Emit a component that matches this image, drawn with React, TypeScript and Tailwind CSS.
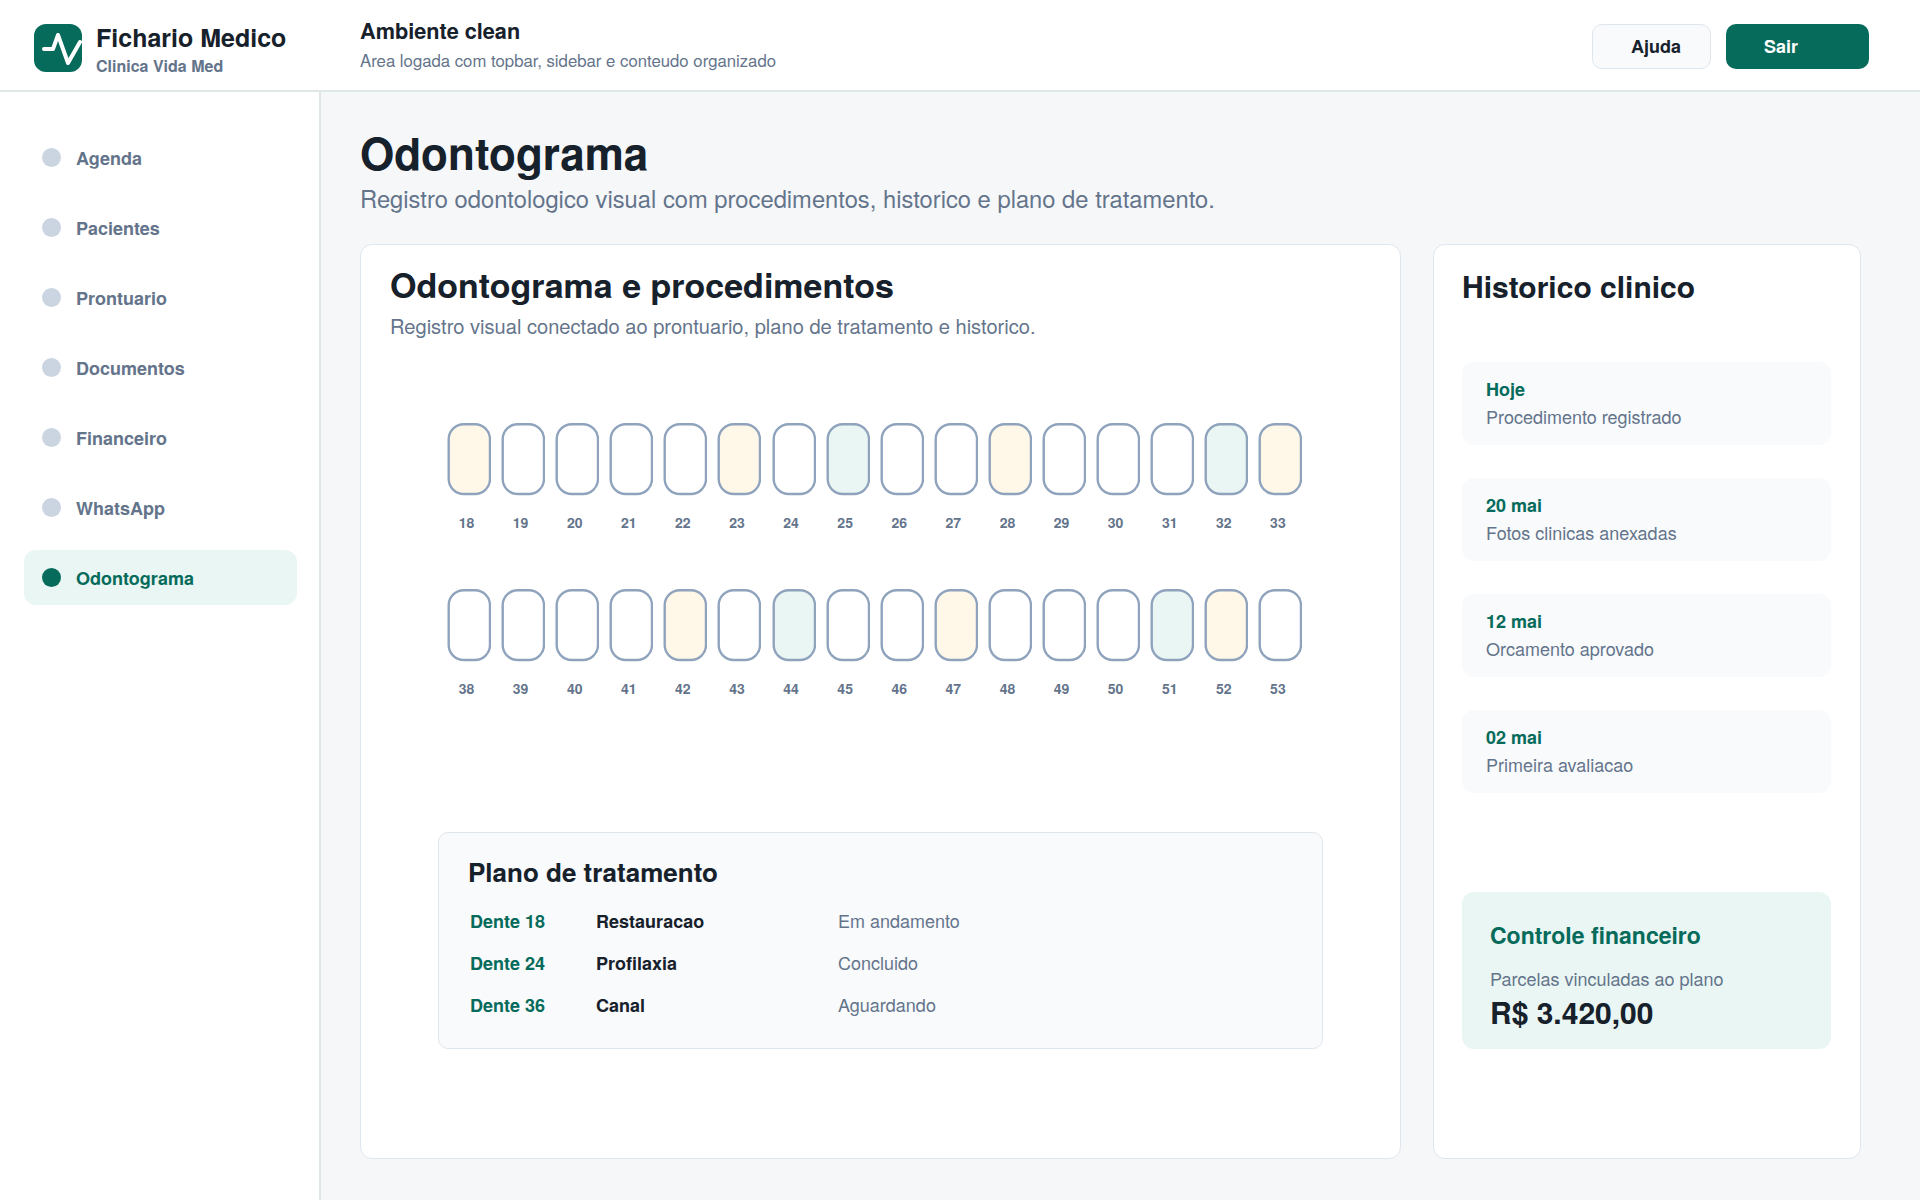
const navItems = ["Agenda", "Pacientes", "Prontuario", "Documentos", "Financeiro", "WhatsApp", "Odontograma"]

const amber = [18, 23, 28, 33, 42, 47, 52]
const green = [25, 32, 44, 51]

const historico = [
  { date: "Hoje", text: "Procedimento registrado" },
  { date: "20 mai", text: "Fotos clinicas anexadas" },
  { date: "12 mai", text: "Orcamento aprovado" },
  { date: "02 mai", text: "Primeira avaliacao" },
]

const plano = [
  { dente: "Dente 18", proc: "Restauracao", status: "Em andamento" },
  { dente: "Dente 24", proc: "Profilaxia", status: "Concluido" },
  { dente: "Dente 36", proc: "Canal", status: "Aguardando" },
]

const range = (from: number, to: number) => {
  const out: number[] = []
  for (let n = from; n <= to; n++) out.push(n)
  return out
}

const Tooth = ({ n }: { n: number }) => {
  const fill = amber.includes(n) ? "#fff7e8" : green.includes(n) ? "#e9f6f3" : "#ffffff"
  return (
    <div className="flex w-[44px] flex-col">
      <svg width="44" height="73" viewBox="0 0 44 73" fill="none">
        <rect x="1.7" y="1.3" width="41.3" height="69.7" rx="15" fill={fill} stroke="#8fa3bd" strokeWidth="2.4" />
      </svg>
      <div className="mt-[16px] w-[39px] text-center text-[14px] leading-[20px] font-bold text-[#64748b]">{n}</div>
    </div>
  )
}

export default function App() {
  return (
    <div className="flex h-[1200px] w-[1920px] flex-col overflow-hidden bg-[#f5f7f9] font-['TeX_Gyre_Heros','Liberation_Sans',Arial,sans-serif] text-[#17212b]">
      {/* Topbar */}
      <header className="flex h-[92px] shrink-0 items-start border-b-2 border-[#dfe7e7] bg-white pt-[24px]">
        <div className="flex w-[360px] items-start pl-[34px]">
          <div className="h-[48px] w-[48px] overflow-hidden rounded-[12px] bg-[#066b5b]">
            <svg width="48" height="48" viewBox="0 0 48 48" fill="none">
              <path d="M10 25h9l5-14 10 28 12-21" stroke="#fff" strokeWidth="4" strokeLinecap="round" strokeLinejoin="round" />
            </svg>
          </div>
          <div className="-mt-[2px] ml-[14px]">
            <div className="text-[25px] leading-[30px] font-bold">Fichario Medico</div>
            <div className="mt-[4px] text-[16px] leading-[20px] font-bold text-[#64748b]">Clinica Vida Med</div>
          </div>
        </div>
        <div className="-mt-[6px] flex-1">
          <div className="text-[21.7px] leading-[26px] font-bold">Ambiente clean</div>
          <div className="mt-[5px] text-[16.75px] leading-[22px] text-[#64748b]">Area logada com topbar, sidebar e conteudo organizado</div>
        </div>
        <div className="flex items-center gap-[15px] pr-[51px]">
          <button className="h-[45px] w-[119px] rounded-[10px] border border-[#dfe7ee] bg-[#f8fafc] pl-[38px] text-left text-[18px] font-bold">Ajuda</button>
          <button className="h-[45px] w-[143px] rounded-[10px] bg-[#066b5b] pl-[38px] text-left text-[18px] font-bold text-white">Sair</button>
        </div>
      </header>

      <div className="flex min-h-0 flex-1">
        {/* Sidebar */}
        <aside className="flex w-[321px] shrink-0 flex-col gap-[15px] border-r-2 border-[#dfe7e7] bg-white pt-[38px] pr-[22px] pl-[24px]">
          {navItems.map((item) => {
            const active = item === "Odontograma"
            return (
              <div key={item} className={`flex h-[55px] items-center rounded-[12px] pl-[18px] ${active ? "bg-[#eaf6f3]" : ""}`}>
                <span className={`h-[19px] w-[19px] rounded-full ${active ? "bg-[#066b5b]" : "bg-[#cbd5e1]"}`} />
                <span className={`ml-[15px] pt-[2px] text-[18px] font-bold ${active ? "text-[#066b5b]" : "text-[#64748b]"}`}>{item}</span>
              </div>
            )
          })}
        </aside>

        {/* Main */}
        <main className="min-w-0 flex-1 pt-[34px] pl-[39px]">
          <h1 className="text-[44px] leading-[52px] font-bold">Odontograma</h1>
          <p className="mt-[5px] text-[23.75px] leading-[30px] text-[#64748b]">Registro odontologico visual com procedimentos, historico e plano de tratamento.</p>

          <div className="mt-[31px] flex gap-[32px]">
            <section className="h-[915px] w-[1041px] rounded-[12px] border border-[#dfe7ee] bg-white">
              <div className="px-[29px] pt-[18px]">
                <h2 className="text-[34px] leading-[42px] font-bold">Odontograma e procedimentos</h2>
                <p className="mt-[8px] text-[20.1px] leading-[26px] text-[#64748b]">Registro visual conectado ao prontuario, plano de tratamento e historico.</p>
              </div>

              <div className="mt-[84px] flex gap-[10.1px] pl-[86px]">
                {range(18, 33).map((n) => (
                  <Tooth key={n} n={n} />
                ))}
              </div>
              <div className="mt-[57px] flex gap-[10.1px] pl-[86px]">
                {range(38, 53).map((n) => (
                  <Tooth key={n} n={n} />
                ))}
              </div>

              <div className="mt-[134px] ml-[77px] h-[217px] w-[885px] rounded-[10px] border border-[#dfe7ee] bg-[#f8fafc] pt-[23px] pl-[29px]">
                <h3 className="text-[26px] leading-[32px] font-bold">Plano de tratamento</h3>
                <div className="mt-[12px] flex flex-col">
                  {plano.map((row) => (
                    <div key={row.dente} className="flex h-[42px] items-center pl-[2px] text-[18px]">
                      <span className="w-[126px] font-bold text-[#066b5b]">{row.dente}</span>
                      <span className="w-[242px] font-bold">{row.proc}</span>
                      <span className="pb-[2px] text-[#64748b]">{row.status}</span>
                    </div>
                  ))}
                </div>
              </div>
            </section>

            <section className="h-[915px] w-[428px] rounded-[12px] border border-[#dfe7ee] bg-white pt-[18px] pr-[29px] pl-[28px]">
              <h2 className="text-[30px] leading-[46px] font-bold">Historico clinico</h2>
              <div className="mt-[53px] flex flex-col gap-[33px]">
                {historico.map((item) => (
                  <div key={item.date} className="h-[83px] rounded-[12px] bg-[#f8fafc] px-[24px] pt-[13px]">
                    <div className="text-[18px] leading-[28px] font-bold text-[#066b5b]">{item.date}</div>
                    <div className="-mt-[1px] text-[18px] leading-[28px] text-[#64748b]">{item.text}</div>
                  </div>
                ))}
              </div>
              <div className="mt-[99px] h-[157px] rounded-[12px] bg-[#eaf6f3] px-[28px] pt-[28px]">
                <div className="text-[23px] leading-[30px] font-bold text-[#066b5b]">Controle financeiro</div>
                <div className="mt-[15px] text-[18px] leading-[26px] text-[#64748b]">Parcelas vinculadas ao plano</div>
                <div className="mt-[3px] text-[30px] leading-[36px] font-bold">R$ 3.420,00</div>
              </div>
            </section>
          </div>
        </main>
      </div>
    </div>
  )
}
